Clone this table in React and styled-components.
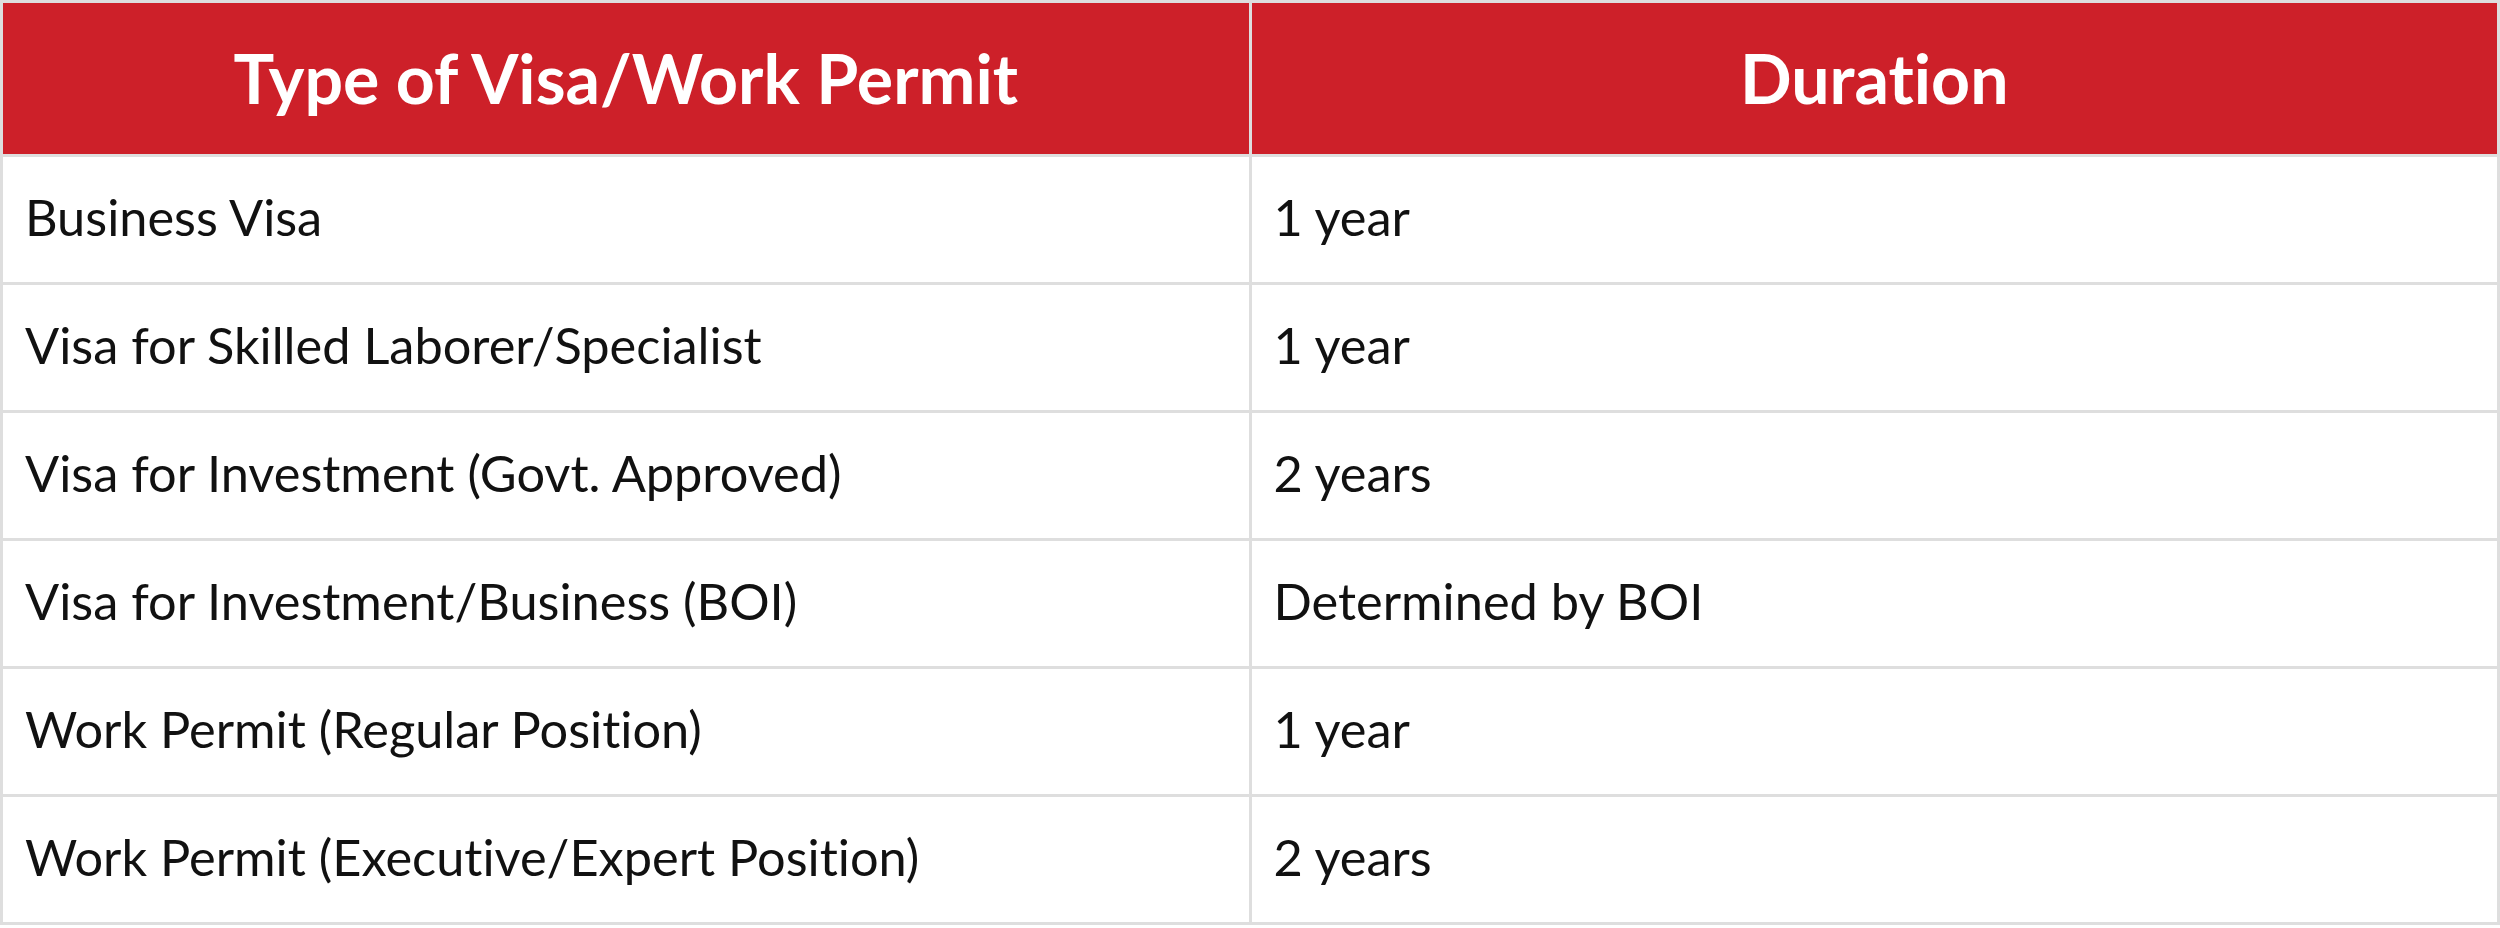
import React from "react";
import styled, {createGlobalStyle} from 'styled-components';

const GlobalStyle = createGlobalStyle`
  html, body {
    margin: 0;
    padding: 0;
    background: #ffffff;
  }
  body {
    font-family: Lato, "Noto Sans", sans-serif;
    font-variant-ligatures: none;
  }
`;

const Table = styled.table`
  width: 2500px;
  table-layout: fixed;
  border-collapse: separate;
  border-spacing: 3px;
  background: #dedede;
`;

const HeadCell = styled.th`
  height: 149px;
  padding: 0 24px 2px;
  background: #cd2029;
  color: #ffffff;
  font-family: Lato, sans-serif;
  font-weight: 700;
  font-size: 68px;
  font-variant-ligatures: none;
  text-align: center;
  vertical-align: middle;
`;

const Cell = styled.td`
  height: 119px;
  padding: 0 22px 6px;
  background: #ffffff;
  color: #111111;
  font-family: Lato, sans-serif;
  font-weight: 400;
  font-size: 50.5px;
  font-variant-ligatures: none;
  text-align: left;
  vertical-align: middle;
  white-space: nowrap;
`;

const rows = [
    {type: "Business Visa", duration: "1 year"},
    {type: "Visa for Skilled Laborer/Specialist", duration: "1 year"},
    {type: "Visa for Investment (Govt. Approved)", duration: "2 years"},
    {type: "Visa for Investment/Business (BOI)", duration: "Determined by BOI"},
    {type: "Work Permit (Regular Position)", duration: "1 year"},
    {type: "Work Permit (Executive/Expert Position)", duration: "2 years"},
];

const App = () => {
    return (
        <>
            <GlobalStyle/>
            <Table>
                <thead>
                <tr>
                    <HeadCell>Type of Visa/Work Permit</HeadCell>
                    <HeadCell>Duration</HeadCell>
                </tr>
                </thead>
                <tbody>
                {rows.map((row) => (
                    <tr key={row.type}>
                        <Cell>{row.type}</Cell>
                        <Cell>{row.duration}</Cell>
                    </tr>
                ))}
                </tbody>
            </Table>
        </>
    );
};

export default App;
